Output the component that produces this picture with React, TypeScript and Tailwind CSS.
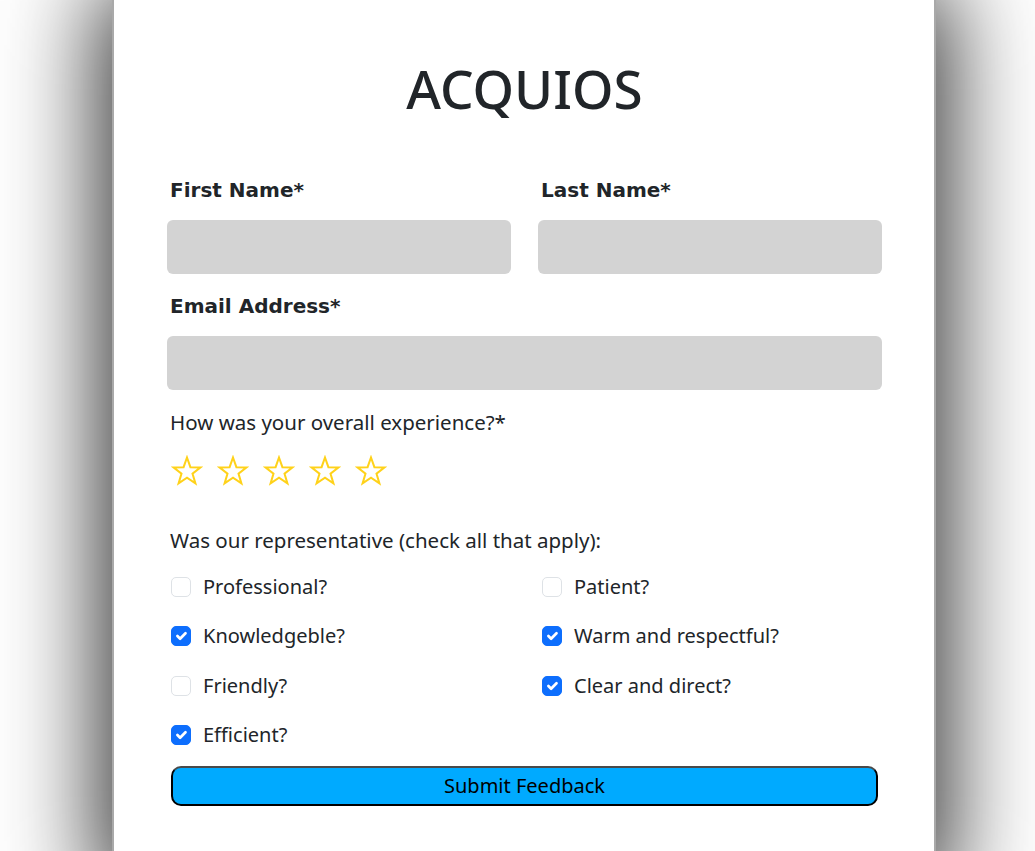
import { useState } from "react";

const labelFont = { fontFamily: '"Comic Sans MS", "DejaVu Sans", sans-serif' };

function Star() {
  return (
    <svg viewBox="0 0 32 32" className="h-[32px] w-[32px]">
      <polygon
        points="16,2.5 19.4,12.2 29.6,12.4 21.5,18.6 24.4,28.4 16,22.6 7.6,28.4 10.5,18.6 2.4,12.4 12.6,12.2"
        fill="none"
        stroke="#ffd21a"
        strokeWidth="2"
        strokeLinejoin="miter"
      />
    </svg>
  );
}

function Check({ label, initial }: { label: string; initial: boolean }) {
  const [checked, setChecked] = useState(initial);
  return (
    <label className="flex h-[30px] cursor-pointer items-center gap-[12px] pl-[4px]" onClick={() => setChecked(!checked)}>
      <span
        className={
          checked
            ? "flex h-[20px] w-[20px] items-center justify-center rounded-[5px] border border-[#0d6efd] bg-[#0d6efd]"
            : "flex h-[20px] w-[20px] items-center justify-center rounded-[5px] border border-[#dee2e6] bg-white"
        }
      >
        {checked && (
          <svg viewBox="0 0 20 20" className="h-[20px] w-[20px]">
            <path d="m6 10 3 3 6-6" fill="none" stroke="#fff" strokeWidth="3" strokeLinecap="round" strokeLinejoin="round" />
          </svg>
        )}
      </span>
      <span className="text-[20px] text-[#212529]">{label}</span>
    </label>
  );
}

export default function App() {
  return (
    <div className="min-h-screen overflow-hidden bg-white" style={{ fontFamily: '"Noto Sans", "Open Sans", sans-serif' }}>
      <div className="ml-[112px] w-[824px] border-x-2 border-[#a9a9a9] bg-white pb-[80px] pl-[53px] pr-[52px] pt-[57px] shadow-[0_0_90px_14px_rgba(0,0,0,0.8)]">
        <h1 className="mb-[54px] text-center text-[53px] font-medium leading-[1.2] text-[#212529]">ACQUIOS</h1>

        <div className="grid grid-cols-2 gap-x-[27px]">
          <div>
            <div className="mb-[15px] h-[30px] pl-[3px] text-[20px] font-bold leading-[30px] text-[#212529]" style={labelFont}>
              First Name*
            </div>
            <div className="h-[54px] rounded-[6px] bg-[#d3d3d3]" />
          </div>
          <div>
            <div className="mb-[15px] h-[30px] pl-[3px] text-[20px] font-bold leading-[30px] text-[#212529]" style={labelFont}>
              Last Name*
            </div>
            <div className="h-[54px] rounded-[6px] bg-[#d3d3d3]" />
          </div>
        </div>

        <div className="mt-[17px] mb-[15px] h-[30px] pl-[3px] text-[20px] font-bold leading-[30px] text-[#212529]" style={labelFont}>
          Email Address*
        </div>
        <div className="h-[54px] rounded-[6px] bg-[#d3d3d3]" />

        <div className="mt-[17px] h-[30px] pl-[3px] text-[20.5px] leading-[30px] text-[#212529]">How was your overall experience?*</div>
        <div className="mt-[16px] flex h-[36px] items-center gap-[14px] pl-[4px]">
          <Star />
          <Star />
          <Star />
          <Star />
          <Star />
        </div>

        <div className="mt-[36px] h-[30px] pl-[3px] text-[20.5px] leading-[30px] text-[#212529]">Was our representative (check all that apply):</div>

        <div className="mt-[17px] grid grid-cols-2 gap-x-[27px] gap-y-[19.5px]">
          <Check label="Professional?" initial={false} />
          <Check label="Patient?" initial={false} />
          <Check label="Knowledgeble?" initial={true} />
          <Check label="Warm and respectful?" initial={true} />
          <Check label="Friendly?" initial={false} />
          <Check label="Clear and direct?" initial={true} />
          <Check label="Efficient?" initial={true} />
        </div>

        <div className="px-[4px] pt-[16px]">
          <button className="block h-[40px] w-full rounded-[10px] border-2 border-black border-t-[#4a4a4a] bg-[#00aaff] text-[20px] text-black">
            Submit Feedback
          </button>
        </div>
      </div>
    </div>
  );
}
